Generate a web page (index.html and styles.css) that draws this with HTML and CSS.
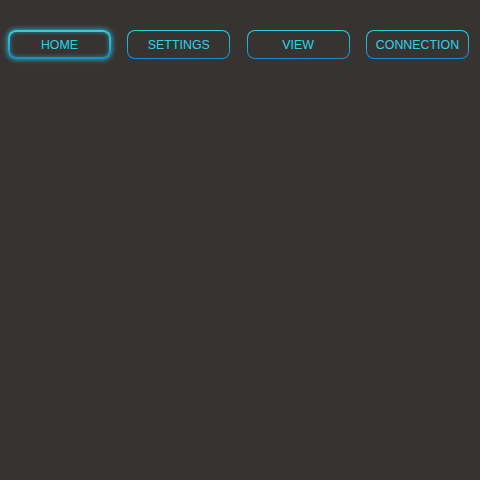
FILE: index.html
```html
<!DOCTYPE html>
<html>
<head>
<meta charset="utf-8">
<link rel="stylesheet" href="styles.css">
</head>
<body>
<nav class="nav">
  <button class="btn active">HOME</button>
  <button class="btn">SETTINGS</button>
  <button class="btn">VIEW</button>
  <button class="btn">CONNECTION</button>
</nav>
</body>
</html>
```
FILE: styles.css
```css
html, body {
  margin: 0;
  height: 100%;
  background: #373331;
}
.nav {
  display: flex;
  justify-content: space-between;
  width: 461px;
  padding: 30px 0 0 8px;
}
.btn {
  width: 103px;
  height: 29px;
  box-sizing: border-box;
  border: 1.5px solid transparent;
  border-radius: 8px;
  background:
    linear-gradient(#373331, #373331) padding-box,
    linear-gradient(#2dd2e2, #1a8ccb) border-box;
  color: #2ad3ea;
  font-family: "Liberation Sans", Arial, sans-serif;
  font-size: 12.4px;
  padding: 0;
  text-align: center;
}
.active {
  border-width: 2.5px;
  box-shadow: 0 0 5px 1px rgba(40, 200, 225, 0.75), inset 0 0 4px rgba(40, 200, 225, 0.6);
}
```
